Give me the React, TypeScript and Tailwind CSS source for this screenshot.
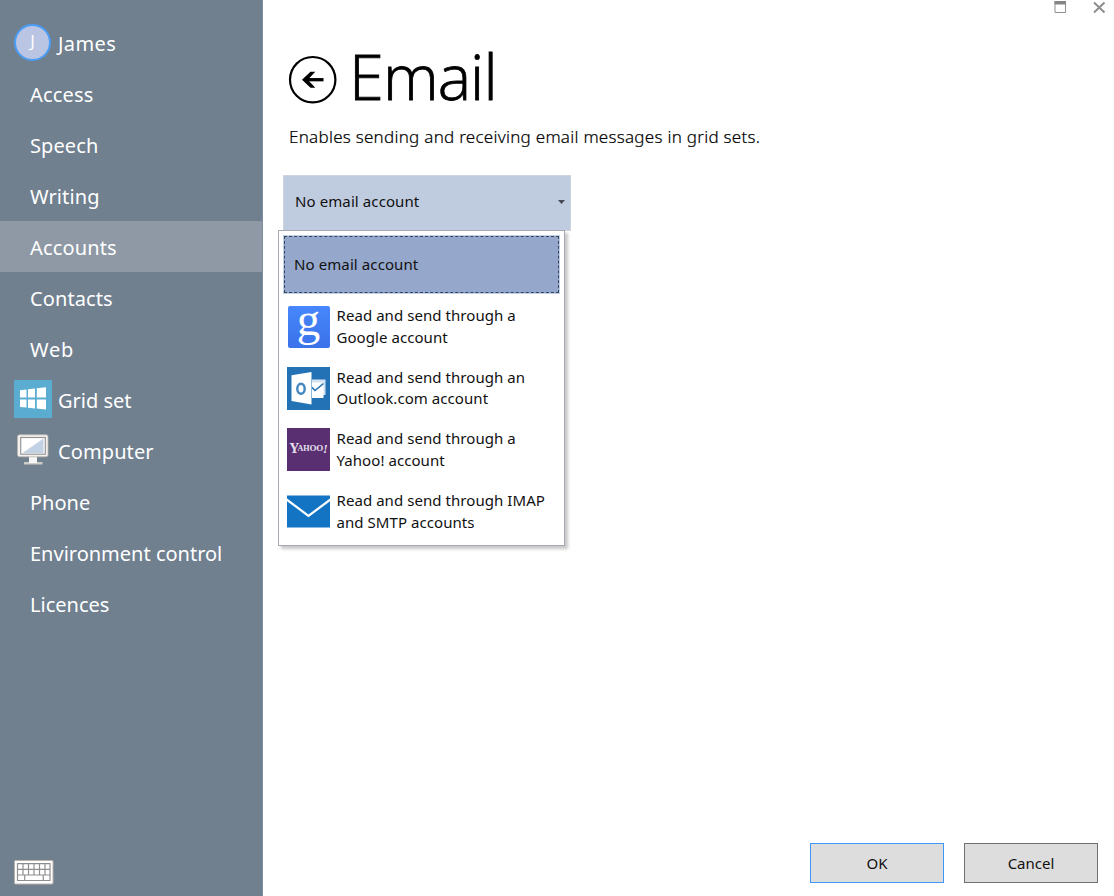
import type { ReactNode } from "react";

function Avatar() {
  return (
    <span className="mt-px flex size-[37px] items-center justify-center rounded-full border-2 border-[#4a9cf5] bg-[#b9c5e3] pb-0.5 font-['Open_Sans',sans-serif] text-[17px] text-white">
      J
    </span>
  );
}

function WindowsIcon() {
  return (
    <svg width="38" height="38" viewBox="0 0 38 38">
      <rect width="38" height="38" fill="#5aadd1" />
      <path
        fill="#fff"
        d="M6 10.2l6.5-.8v8H6zM14 9.2l7-.8v9h-7zM22.8 8.3l9.2-1v10.1h-9.2zM6 19.6h6.5v8l-6.5-.7zM14 19.6h7v9l-7-.9zM22.8 19.6H32v10l-9.2-1z"
      />
    </svg>
  );
}

function ComputerIcon() {
  return (
    <svg width="38" height="38" viewBox="0 0 38 38">
      <path fill="#f7f7f7" d="M15 25h8v6.500h-8z" />
      <path fill="#cfcdca" d="M10 31h18.500v2.500H10z" />
      <path fill="#f7f7f7" d="M15 30h8v2h-8z" />
      <rect x="3.500" y="3.800" width="30.500" height="22" rx="2" fill="#f3f2f1" stroke="#b9b4ae" strokeWidth=".8" />
      <rect x="6.700" y="6.500" width="24.600" height="16.700" fill="#fff" stroke="#969696" strokeWidth="1.200" />
      <path fill="#c3d1e5" d="M29.500 7.500V22H8.500z" />
    </svg>
  );
}

function KeyboardIcon() {
  return (
    <svg width="40" height="25" viewBox="0 0 40 25">
      <rect x=".5" y=".5" width="38.500" height="23.500" rx="1" fill="#fff" stroke="#b9b0aa" />
      <path
        fill="none"
        stroke="#8f8f8f"
        strokeWidth="1.200"
        d="M3.500 3.700h32.500v16.800h-32.500zM3.500 9.400h32.500M3.500 15h32.500M9 3.700V15M14.500 3.700V15M20 3.700V15M25.500 3.700V15M31 3.700V15M10.700 15v5.500M29.300 15v5.500"
      />
    </svg>
  );
}

function GoogleIcon() {
  return (
    <span className="flex size-[43px] p-[0.5px]">
      <span className="flex size-[42px] justify-center rounded-[2px] bg-linear-to-b from-[#4787fb] to-[#3a72ea] font-['Liberation_Serif',serif] text-[47px] leading-[26px] text-white">
        g
      </span>
    </span>
  );
}

function OutlookIcon() {
  return (
    <svg width="43" height="43" viewBox="0 0 43 43">
      <rect width="43" height="43" fill="#2272b5" />
      <path fill="#d3e3f1" d="M25 12.500h13.500V28H25z" />
      <path fill="#fff" d="M25 15.500h11.500V31H25z" />
      <path fill="none" stroke="#2272b5" strokeWidth="1.600" d="M24 19.500l4 4 8.500-7" />
      <path fill="#fff" d="M4.500 8.300L24.500 5v32.500l-20-3.500z" />
      <ellipse cx="14" cy="21.700" rx="3.700" ry="5" fill="none" stroke="#4488bf" strokeWidth="2.500" />
    </svg>
  );
}

function YahooIcon() {
  return (
    <span className="flex size-[43px] items-center justify-center overflow-hidden bg-[#592f71] pb-0.5 font-['Liberation_Serif',serif] leading-none font-bold text-[#e9e0ee]">
      <span className="text-[14px]">Y</span>
      <span className="-ml-[2px] text-[8px]">AH</span>
      <span className="text-[9px] tracking-[-0.200px]">OO</span>
      <span className="text-[12px] italic">!</span>
    </span>
  );
}

function MailIcon() {
  return (
    <svg width="43" height="43" viewBox="0 0 43 43">
      <rect y="5.500" width="43" height="32" fill="#1374c4" />
      <path fill="none" stroke="#fff" strokeWidth="2.200" d="M-.5 9.500l22 16.300 22-16.300" />
    </svg>
  );
}

type NavEntry = { label: string; text: string; icon?: ReactNode; active?: boolean };

const nav: NavEntry[] = [
  { label: "James", text: "tracking-[0.4px]", icon: <Avatar /> },
  { label: "Access", text: "tracking-[0.2px]" },
  { label: "Speech", text: "tracking-[0.1px]" },
  { label: "Writing", text: "tracking-[0.1px]" },
  { label: "Accounts", text: "tracking-[0.15px]", active: true },
  { label: "Contacts", text: "tracking-[0.1px]" },
  { label: "Web", text: "tracking-[0.8px]" },
  { label: "Grid set", text: "tracking-[0px]", icon: <WindowsIcon /> },
  { label: "Computer", text: "tracking-[0.1px]", icon: <ComputerIcon /> },
  { label: "Phone", text: "tracking-[0px]" },
  { label: "Environment control", text: "tracking-[0px]" },
  { label: "Licences", text: "tracking-[0px]" },
];

const options = [
  { icon: <GoogleIcon />, lines: ["Read and send through a", "Google account"] },
  { icon: <OutlookIcon />, lines: ["Read and send through an", "Outlook.com account"] },
  { icon: <YahooIcon />, lines: ["Read and send through a", "Yahoo! account"] },
  { icon: <MailIcon />, lines: ["Read and send through IMAP", "and SMTP accounts"] },
];

function Sidebar() {
  return (
    <aside className="flex w-[263px] shrink-0 flex-col justify-between border-r border-[#7c90a4] bg-[#70808f] pt-[17px] pb-[11px] text-white">
      <nav>
        {nav.map((item) => (
          <div
            key={item.label}
            className={
              item.active
                ? "flex h-[51px] items-center bg-[#8e99a5] pl-[30px]"
                : item.icon
                  ? "flex h-[51px] items-center pl-3.5"
                  : "flex h-[51px] items-center pl-[30px]"
            }
          >
            {item.icon && <span className="mr-1.5 flex w-[38px] shrink-0 pb-0.5">{item.icon}</span>}
            <span className={`whitespace-nowrap pt-0.5 text-[20px] leading-6 ${item.text}`}>{item.label}</span>
          </div>
        ))}
      </nav>
      <div className="pl-3.5">
        <KeyboardIcon />
      </div>
    </aside>
  );
}

function AccountMenu() {
  return (
    <div className="absolute top-[55px] left-[-5px] h-[316px] w-[287px] border border-[#a5a9b2] bg-white p-1 shadow-[3px_3px_3px_rgba(0,0,0,0.22)]">
      <div className="flex h-[59px] w-[277px] items-center border border-[#c2d0e8] bg-[#c2d0e8]">
        <div className="flex h-[57px] w-full items-center border border-dashed border-[#34445f] bg-[#95a8cb] pb-px pl-[9px]">
          <span className="tracking-[0.1px]">No email account</span>
        </div>
      </div>
      <div className="pt-0.5">
        {options.map((option) => (
          <div key={option.lines[1]} className="flex h-[61.6px] items-center gap-1.5 pl-1">
            <span className="shrink-0">{option.icon}</span>
            <div className="pl-[0.5px] leading-[21.500px] tracking-[0.06px] whitespace-nowrap">
              {option.lines.map((line) => (
                <div key={line}>{line}</div>
              ))}
            </div>
          </div>
        ))}
      </div>
    </div>
  );
}

export default function App() {
  return (
    <div className="flex h-[896px] w-[1114px] overflow-hidden bg-white font-['Noto_Sans',sans-serif] text-[15px] text-[#111]">
      <Sidebar />
      <main className="flex flex-1 flex-col">
        <div className="flex h-[18px] justify-end gap-[26px] pr-2">
          <svg width="13" height="14" viewBox="0 0 13 14">
            <path fill="none" stroke="#8f8f8f" d="M1 1.500h10.500v11H1z" />
            <path fill="#858585" d="M.5 1h11.500v3.500H.5z" />
          </svg>
          <svg width="13" height="14" viewBox="0 0 13 14">
            <path stroke="#8d8d8d" strokeWidth="2" d="M1 2.500l10.500 10M11.500 2.500L1 12.500" />
          </svg>
        </div>
        <header className="flex h-[105px] items-center pl-[25px]">
          <svg width="50" height="50" viewBox="0 0 50 50" className="mt-[18px]">
            <circle cx="24.700" cy="24.700" r="22.700" fill="none" stroke="#000" strokeWidth="2.200" />
            <path fill="none" stroke="#000" strokeWidth="3.300" d="M35.500 24.700H17" />
            <path fill="#000" d="M14 24.700l8.500-8h4.800l-7.500 8 7.500 8h-4.800z" />
          </svg>
          <h1 className="ml-[11px] mt-[11px] font-['Open_Sans',sans-serif] text-[63px] leading-[80px] font-light tracking-[-0.900px] text-black [-webkit-text-stroke:0.8px_#000]">
            Email
          </h1>
        </header>
        <p className="pt-px pl-[26px] text-[17px] leading-[25px] font-light tracking-[0.27px] whitespace-nowrap text-black [-webkit-text-stroke:0.2px_#000]">
          Enables sending and receiving email messages in grid sets.
        </p>
        <div className="relative mt-[26px] ml-5 h-14 w-[288px]">
          <div className="flex h-full items-center justify-between border border-[#cfd5df] bg-[#bfcbdf] pr-[5px] pb-[3px] pl-[11px]">
            <span className="tracking-[0.1px]">No email account</span>
            <svg width="7" height="4" viewBox="0 0 7 4">
              <path fill="#444b57" d="M0 0h7L3.500 4z" />
            </svg>
          </div>
          <AccountMenu />
        </div>
        <div className="mt-auto mr-4 mb-[13px] flex justify-end gap-5">
          <button className="h-10 w-[134px] border border-[#3f97f5] bg-[#ddd] pt-px text-[15px] tracking-[-0.1px]">OK</button>
          <button className="h-10 w-[134px] border border-[#707070] bg-[#ddd] pt-px text-[15px]">Cancel</button>
        </div>
      </main>
    </div>
  );
}
